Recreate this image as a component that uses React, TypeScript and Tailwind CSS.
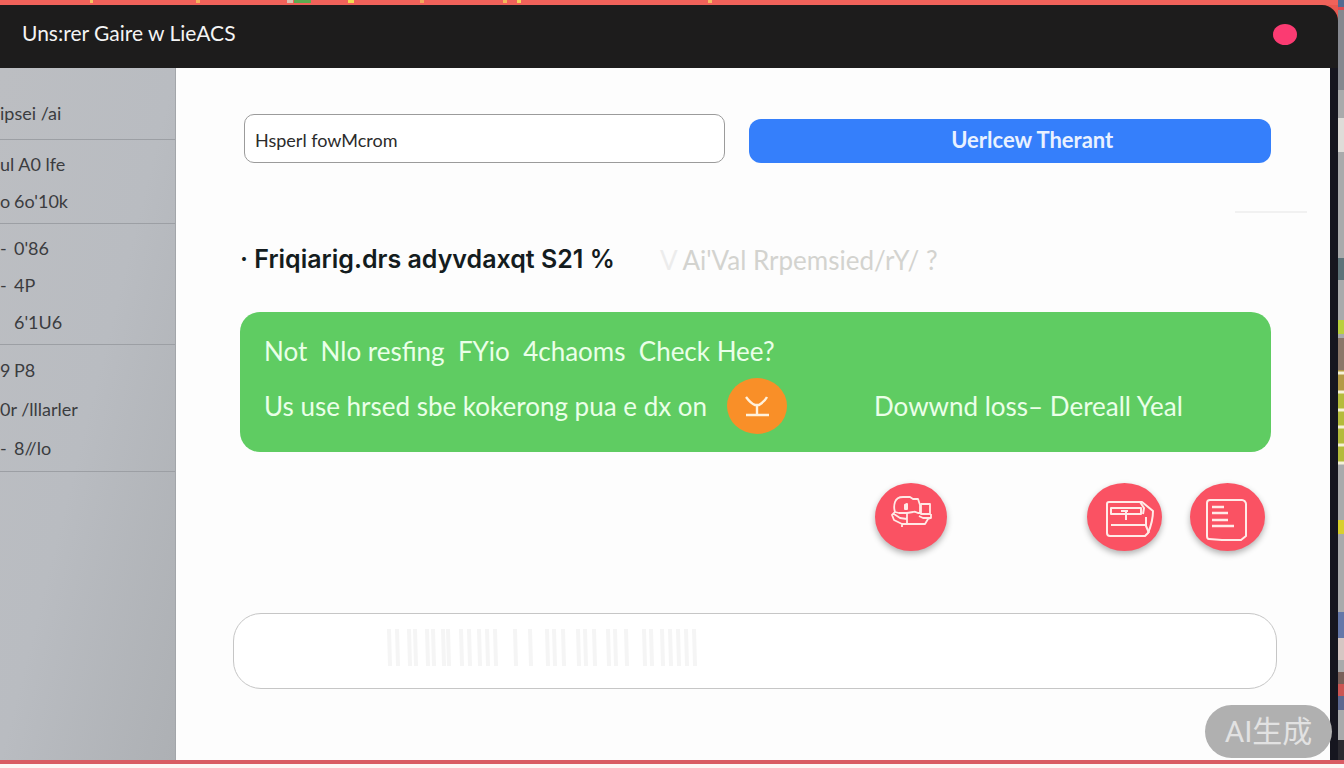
const menuGroups = [
  [{ mark: "", text: "ipsei /ai" }],
  [
    { mark: "", text: "ul A0 lfe" },
    { mark: "o", text: "6o'10k" },
  ],
  [
    { mark: "-", text: "0'86" },
    { mark: "-", text: "4P" },
    { mark: " ", text: "6'1U6" },
  ],
  [
    { mark: "9", text: "P8" },
    { mark: "", text: "0r /lllarler" },
    { mark: "-", text: "8//lo" },
  ],
];

const topMarks = [
  { x: 90, w: 3, color: "#f6c560" },
  { x: 196, w: 4, color: "#f5b35c" },
  { x: 287, w: 6, color: "#d9c3b4" },
  { x: 294, w: 17, color: "#5cab50" },
  { x: 348, w: 6, color: "#f2dc4f" },
  { x: 420, w: 4, color: "#f3a85a" },
  { x: 503, w: 4, color: "#f4b95a" },
  { x: 517, w: 4, color: "#f2d75c" },
  { x: 708, w: 4, color: "#f5bd62" },
];

const barMarks = [
  388, 396, 408, 414, 426, 432, 442, 447, 460, 468, 478, 486, 494, 514, 529,
  546, 553, 562, 577, 584, 593, 607, 614, 625, 643, 650, 661, 669, 677, 685,
  693,
];

const Header = () => {
  return (
    <header className="flex h-[63px] items-center justify-between rounded-tr-2xl bg-[#1d1c1c] pb-2 pl-[22px] pr-[41px]">
      <h1 className="text-[21px] text-[#f4f4f4]">Uns:rer Gaire w LieACS</h1>
      <button
        aria-label="Close"
        className="mt-1 h-[21px] w-6 rounded-[50%] bg-[#fb3b72]"
      />
    </header>
  );
};

const Sidebar = () => {
  return (
    <nav className="w-44 shrink-0 overflow-hidden border-r border-[#a3a6aa] bg-linear-to-br from-[#bcbec2] via-[#b9bcc1] to-[#adb0b4]">
      {menuGroups.map((group, g) => (
        <ul
          key={g}
          className="border-b border-[#9c9fa4] pb-1 pt-[5px] first:pb-2 first:pt-[26px]"
        >
          {group.map((item) => (
            <li
              key={item.text}
              className={`flex items-center ${g === 3 ? "h-[39px]" : "h-[37px]"}`}
            >
              <a
                href="#"
                className="flex whitespace-nowrap text-lg text-[#3b3c3f]"
              >
                {item.mark && <span className="w-3.5">{item.mark}</span>}
                <span>{item.text}</span>
              </a>
            </li>
          ))}
        </ul>
      ))}
    </nav>
  );
};

const iconButton =
  "flex h-[68px] items-center justify-center rounded-[50%] bg-[#fa5263] shadow-[0_3px_6px_rgba(0,0,0,0.3)]";

const Actions = () => {
  return (
    <div className="mt-[31px] flex justify-end pl-2 pr-1.5">
      <button aria-label="Share" className={`${iconButton} mr-[140px] w-[72px]`}>
        <svg width="72" height="68" viewBox="0 0 72 68" fill="none" stroke="#ffe9e6" strokeWidth="1.8" strokeLinejoin="round">
          <path d="M20 29c-1-3-1-7 0-10 1-3 4-5 8-5l7 0 3 2h5l2 6v8h-2c-2 0-2-2-5-1l-6 1-8 0z" />
          <path d="M30 26v-4l2-1v5z" strokeWidth="2" />
          <path d="M46 21h9v10h-9zM20 29l-3 3 2 5 8 4v3M27 41h23l3-5 3-1v-4M19 31l6 4 7 1M32 29v12M56 35h-8l-4-2" />
        </svg>
      </button>
      <button aria-label="Card" className={`${iconButton} mr-7 w-[75px]`}>
        <svg width="75" height="68" viewBox="0 0 75 68" fill="none" stroke="#ffebe8" strokeWidth="2" strokeLinejoin="round">
          <path d="M22 19h33l11 9c0 8-2 15-5 22l-3 3H23c-2 0-3-1-3-3V21c0-1 1-2 2-2z" />
          <path d="M24 25h30v6H24zM53 19l4 6-1 6M34 28h7M39 28v9M24 42h35M59 34v9l3 7" />
        </svg>
      </button>
      <button aria-label="Document" className={`${iconButton} w-[75px]`}>
        <svg width="75" height="68" viewBox="0 0 75 68" fill="none" stroke="#ffebe8" strokeWidth="2" strokeLinejoin="round">
          <path d="M20 17h32c2 0 4 2 4 4v32l-5 4H32l-13-1c-1 0-2-1-2-3V20c0-2 1-3 3-3z" />
          <path d="M22 24h12M22 30h16M22 37h16M22 43h22" strokeWidth="2.4" />
        </svg>
      </button>
    </div>
  );
};

const Main = () => {
  return (
    <main className="min-w-0 flex-1 bg-[#fdfdfd] pl-16 pr-[59px] pt-[45px]">
      <form className="grid grid-cols-[12fr_13fr] items-center gap-6 pl-1">
        <input
          aria-label="Search"
          defaultValue="Hsperl fowMcrom"
          className="h-[49px] min-w-0 rounded-[10px] border border-[#9b9b9b] bg-white px-2.5 pt-1 text-lg text-[#2b2b2b] outline-none"
        />
        <button
          type="button"
          className="mt-1.5 h-11 min-w-0 rounded-xl bg-[#357ffb] pb-1 pl-11 text-[22px] font-bold text-[#e9f1ff]"
        >
          Uerlcew Therant
        </button>
      </form>
      <div className="ml-auto mt-12 -mr-9 h-[5px] w-[72px] border-t-2 border-[#f1f1f1]" />
      <div className="mt-[26px] flex h-9 items-center">
        <h2 className="w-[420px] whitespace-nowrap font-['Inter',sans-serif] text-[25px] font-semibold text-[#141c1e]">
          · Friqiarig.drs adyvdaxqt S21 %
        </h2>
        <p className="whitespace-nowrap text-[26px] text-[#d3d3cf]">
          <span className="text-[#ececec]">V </span>
          Ai'Val Rrpemsied/rY/ ?
        </p>
      </div>
      <section className="mt-[34px] rounded-[20px] bg-[#5fcc62] px-6 pb-[18px] pt-5 text-[26px] text-[#eaffe8]">
        <p className="h-9 whitespace-pre">
          Not  Nlo resfing  FYio  4chaoms  Check Hee?
        </p>
        <div className="mt-2.5 flex h-14 items-center">
          <p className="w-[463px] whitespace-nowrap">
            Us use hrsed sbe kokerong pua e dx on
          </p>
          <button
            aria-label="Download"
            className="flex h-14 w-[60px] items-center justify-center rounded-[50%] bg-[#f98f28]"
          >
            <svg width="28" height="24" viewBox="0 0 28 24" fill="none" stroke="#fff1dc" strokeWidth="2.4">
              <path d="M3 3c3 4 6 7 9 8h4c3-2 6-4 8-8M14 11v10M3 21h23" />
            </svg>
          </button>
          <p className="ml-[87px] whitespace-nowrap">
            Dowwnd loss– Dereall Yeal
          </p>
        </div>
      </section>
      <Actions />
      <div className="relative -ml-[7px] -mr-1.5 mt-[62px]">
        <input
          aria-label="Message"
          className="block h-[76px] w-full rounded-[28px] border border-[#c6c6c6] bg-white px-8 outline-none"
        />
        <svg
          className="pointer-events-none absolute left-0 top-0"
          width="480"
          height="60"
          stroke="#f5f5f5"
          strokeWidth="4"
        >
          {barMarks.map((x) => (
            <path key={x} d={`M${x - 232} 16l1 37`} />
          ))}
        </svg>
      </div>
    </main>
  );
};

const App = () => {
  return (
    <div className="relative flex min-h-screen flex-col overflow-hidden bg-[#fdf6f5] font-['Lato',sans-serif]">
      <div className="flex flex-1">
        <div className="flex min-w-0 flex-1 flex-col bg-[#e8584f]">
          <svg className="block w-full" height="5">
            <rect width="100%" height="5" fill="#f0625a" />
            {topMarks.map((m) => (
              <rect key={m.x} x={m.x} width={m.w} height="3" fill={m.color} />
            ))}
          </svg>
          <Header />
          <div className="flex flex-1 border-r-8 border-[#16161f]">
            <Sidebar />
            <Main />
          </div>
        </div>
        <svg className="w-1.5 shrink-0" viewBox="0 0 6 760" preserveAspectRatio="none">
          <rect width="6" height="760" fill="#a9aaab" />
          <rect width="6" height="7" fill="#536a92" />
          <rect y="7" width="6" height="3" fill="#dd4a52" />
          <rect y="10" width="6" height="80" fill="#85888f" />
          <rect y="118" width="6" height="34" fill="#dedcd8" />
          <rect y="258" width="6" height="22" fill="#5d7379" />
          <rect y="320" width="6" height="14" fill="#b9cf3f" />
          <rect y="338" width="6" height="32" fill="#8a7668" />
          <rect y="370" width="6" height="22" fill="#b39a45" />
          <rect y="392" width="6" height="70" fill="#b4bb3c" />
          <path d="M0 373h6M0 392h6M0 410h6M0 427h6M0 445h6M0 463h6" stroke="#f5f2d8" strokeWidth="3" />
          <rect y="520" width="6" height="14" fill="#d8cf2e" />
          <rect y="612" width="6" height="26" fill="#6477a8" />
          <rect y="638" width="6" height="22" fill="#d6c6c3" />
          <rect y="672" width="6" height="12" fill="#79605a" />
          <rect y="684" width="6" height="12" fill="#cc5553" />
          <rect y="696" width="6" height="14" fill="#5c6890" />
          <rect y="740" width="6" height="20" fill="#2b2a30" />
        </svg>
      </div>
      <div className="h-1 bg-[#d95b63]" />
      <div className="h-[5px]" />
      <div className="absolute bottom-[11px] right-3 flex h-[53px] w-[127px] items-center justify-center rounded-full bg-[#b0b0b0] font-['Roboto','Noto_Sans_CJK_SC',sans-serif] text-3xl text-[#e2e2e2]">
        AI生成
      </div>
    </div>
  );
};

export default App;
